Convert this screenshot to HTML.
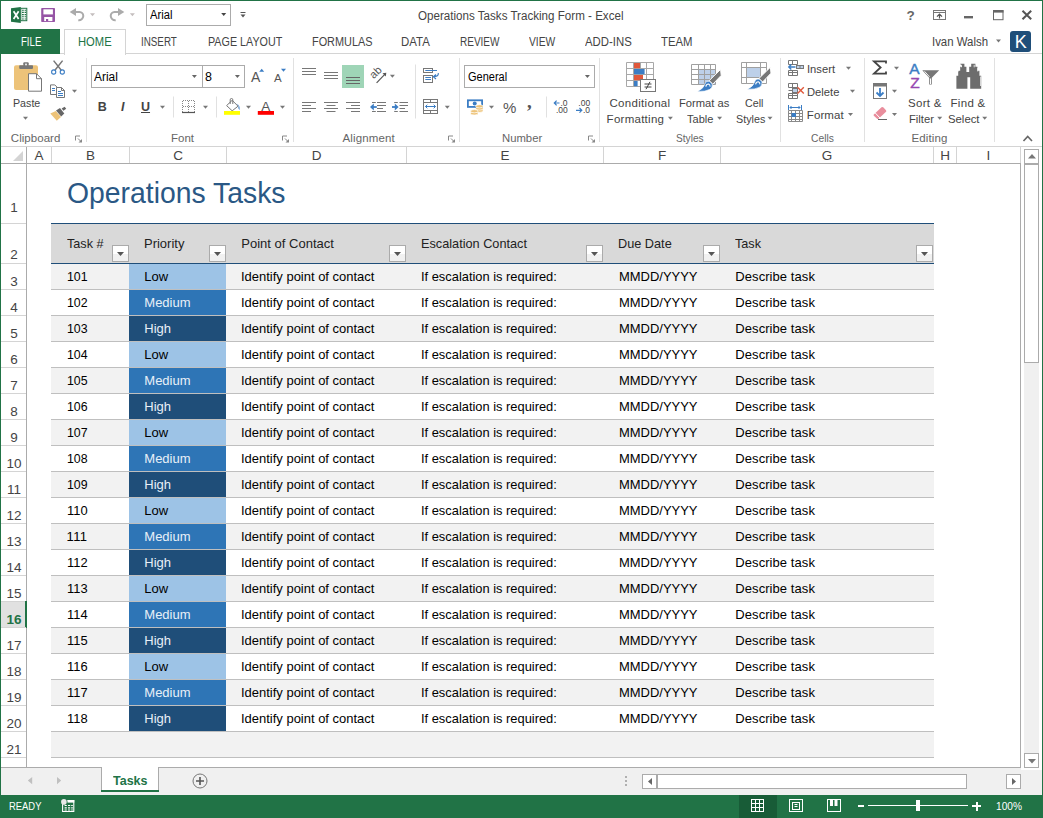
<!DOCTYPE html>
<html><head><meta charset="utf-8"><title>Operations Tasks Tracking Form - Excel</title>
<style>
html,body{margin:0;padding:0;}
body{width:1043px;height:818px;position:relative;overflow:hidden;background:#fff;font-family:"Liberation Sans",sans-serif;}
.t{position:absolute;white-space:nowrap;line-height:20px;height:20px;}
.r{position:absolute;box-sizing:border-box;}
svg{position:absolute;overflow:visible;}
</style></head><body>

<div class="r" style="left:0px;top:0px;width:1043px;height:818px;border:1px solid #217346;border-bottom:none;"></div>
<!--TITLEBAR-->
<span class="t" style="left:418.20px;top:6.00px;font-size:12px;color:#444;transform:scaleX(0.9670);transform-origin:0 0;">Operations Tasks Tracking Form - Excel</span>
<div class="r" style="left:146px;top:4px;width:85px;height:22px;background:#fff;border:1px solid #ababab;"></div>
<span class="t" style="left:149.60px;top:5.00px;font-size:12.5px;color:#000;transform:scaleX(0.8957);transform-origin:0 0;">Arial</span>
<!--/TITLEBAR-->
<!--TABS-->
<div class="r" style="left:1px;top:53px;width:1041px;height:1px;background:#d4d4d4;"></div>
<div class="r" style="left:1px;top:29px;width:59px;height:25px;background:#217346;"></div>
<span class="t" style="left:20.60px;top:32.00px;font-size:12.5px;color:#fff;transform:scaleX(0.7690);transform-origin:0 0;">FILE</span>
<div class="r" style="left:64px;top:29px;width:62px;height:26px;background:#fff;border:1px solid #d4d4d4;border-bottom:none;"></div>
<span class="t" style="left:78.00px;top:32.00px;font-size:12.5px;color:#217346;transform:scaleX(0.8960);transform-origin:0 0;">HOME</span>
<span class="t" style="left:141.20px;top:32.00px;font-size:12.5px;color:#444;transform:scaleX(0.7849);transform-origin:0 0;">INSERT</span>
<span class="t" style="left:207.50px;top:32.00px;font-size:12.5px;color:#444;transform:scaleX(0.8597);transform-origin:0 0;">PAGE LAYOUT</span>
<span class="t" style="left:312.00px;top:32.00px;font-size:12.5px;color:#444;transform:scaleX(0.8711);transform-origin:0 0;">FORMULAS</span>
<span class="t" style="left:401.20px;top:32.00px;font-size:12.5px;color:#444;transform:scaleX(0.9148);transform-origin:0 0;">DATA</span>
<span class="t" style="left:459.50px;top:32.00px;font-size:12.5px;color:#444;transform:scaleX(0.8010);transform-origin:0 0;">REVIEW</span>
<span class="t" style="left:528.75px;top:32.00px;font-size:12.5px;color:#444;transform:scaleX(0.8217);transform-origin:0 0;">VIEW</span>
<span class="t" style="left:585.00px;top:32.00px;font-size:12.5px;color:#444;transform:scaleX(0.9096);transform-origin:0 0;">ADD-INS</span>
<span class="t" style="left:660.50px;top:32.00px;font-size:12.5px;color:#444;transform:scaleX(0.9071);transform-origin:0 0;">TEAM</span>
<span class="t" style="left:932.40px;top:32.00px;font-size:12.5px;color:#444;transform:scaleX(0.9126);transform-origin:0 0;">Ivan Walsh</span>
<div class="r" style="left:1010px;top:31px;width:21px;height:21px;background:#1f4e79;border-radius:3px;"></div>
<span class="t" style="left:1014.80px;top:32.00px;font-size:18px;color:#fff;">K</span>
<!--/TABS-->
<!--RIBBON-->
<div class="r" style="left:1px;top:146px;width:1041px;height:1px;background:#d4d4d4;"></div>
<div class="r" style="left:86px;top:58px;width:1px;height:84px;background:#e1e1e1;"></div>
<div class="r" style="left:293px;top:58px;width:1px;height:84px;background:#e1e1e1;"></div>
<div class="r" style="left:459px;top:58px;width:1px;height:84px;background:#e1e1e1;"></div>
<div class="r" style="left:599px;top:58px;width:1px;height:84px;background:#e1e1e1;"></div>
<div class="r" style="left:780px;top:58px;width:1px;height:84px;background:#e1e1e1;"></div>
<div class="r" style="left:864px;top:58px;width:1px;height:84px;background:#e1e1e1;"></div>
<div class="r" style="left:994px;top:58px;width:1px;height:84px;background:#e1e1e1;"></div>
<span class="t" style="left:10.80px;top:128.00px;font-size:11.5px;color:#666;letter-spacing:0.042px;">Clipboard</span>
<span class="t" style="left:170.70px;top:128.00px;font-size:11.5px;color:#666;transform:scaleX(0.9995);transform-origin:0 0;">Font</span>
<span class="t" style="left:342.50px;top:128.00px;font-size:11.5px;color:#666;letter-spacing:0.129px;">Alignment</span>
<span class="t" style="left:501.80px;top:128.00px;font-size:11.5px;color:#666;transform:scaleX(0.9828);transform-origin:0 0;">Number</span>
<span class="t" style="left:675.60px;top:128.00px;font-size:11.5px;color:#666;transform:scaleX(0.8813);transform-origin:0 0;">Styles</span>
<span class="t" style="left:810.60px;top:128.00px;font-size:11.5px;color:#666;transform:scaleX(0.8959);transform-origin:0 0;">Cells</span>
<span class="t" style="left:911.50px;top:128.00px;font-size:11.5px;color:#666;letter-spacing:0.105px;">Editing</span>
<div class="r" style="left:91px;top:65px;width:112px;height:23px;background:#fff;border:1px solid #ababab;"></div>
<div class="r" style="left:202px;top:65px;width:43px;height:23px;background:#fff;border:1px solid #ababab;"></div>
<span class="t" style="left:94.20px;top:67.00px;font-size:12.5px;color:#000;transform:scaleX(0.9517);transform-origin:0 0;">Arial</span>
<span class="t" style="left:205.00px;top:67.00px;font-size:12.5px;color:#000;">8</span>
<div class="r" style="left:464px;top:65px;width:131px;height:23px;background:#fff;border:1px solid #ababab;"></div>
<span class="t" style="left:467.60px;top:67.00px;font-size:12.5px;color:#000;transform:scaleX(0.8792);transform-origin:0 0;">General</span>
<span class="t" style="left:12.70px;top:93.00px;font-size:11.5px;color:#444;transform:scaleX(0.9283);transform-origin:0 0;">Paste</span>
<span class="t" style="left:609.50px;top:93.00px;font-size:11.5px;color:#444;letter-spacing:0.305px;">Conditional</span>
<span class="t" style="left:606.60px;top:109.00px;font-size:11.5px;color:#444;letter-spacing:0.264px;">Formatting</span>
<span class="t" style="left:679.00px;top:93.00px;font-size:11.5px;color:#444;transform:scaleX(0.9737);transform-origin:0 0;">Format as</span>
<span class="t" style="left:687.20px;top:109.00px;font-size:11.5px;color:#444;transform:scaleX(0.9602);transform-origin:0 0;">Table</span>
<span class="t" style="left:744.60px;top:93.00px;font-size:11.5px;color:#444;transform:scaleX(0.9288);transform-origin:0 0;">Cell</span>
<span class="t" style="left:735.50px;top:109.00px;font-size:11.5px;color:#444;transform:scaleX(0.9356);transform-origin:0 0;">Styles</span>
<span class="t" style="left:806.80px;top:59.00px;font-size:11.5px;color:#444;transform:scaleX(0.9735);transform-origin:0 0;">Insert</span>
<span class="t" style="left:806.80px;top:82.00px;font-size:11.5px;color:#444;transform:scaleX(0.9746);transform-origin:0 0;">Delete</span>
<span class="t" style="left:806.80px;top:105.00px;font-size:11.5px;color:#444;letter-spacing:0.096px;">Format</span>
<span class="t" style="left:908.00px;top:93.00px;font-size:11.5px;color:#444;letter-spacing:0.290px;">Sort &amp;</span>
<span class="t" style="left:909.00px;top:109.00px;font-size:11.5px;color:#444;transform:scaleX(0.9782);transform-origin:0 0;">Filter</span>
<span class="t" style="left:950.50px;top:93.00px;font-size:11.5px;color:#444;letter-spacing:0.310px;">Find &amp;</span>
<span class="t" style="left:948.00px;top:109.00px;font-size:11.5px;color:#444;transform:scaleX(0.9855);transform-origin:0 0;">Select</span>
<span class="t" style="left:97.80px;top:97.00px;font-size:12.5px;color:#444;font-weight:bold;">B</span>
<span class="t" style="left:121.00px;top:97.00px;font-size:12.5px;color:#444;font-weight:bold;font-style:italic;font-family:"Liberation Serif",serif;">I</span>
<span class="t" style="left:141.00px;top:97.00px;font-size:12.5px;color:#444;font-weight:bold;text-decoration:underline;">U</span>
<span class="t" style="left:251.00px;top:67.00px;font-size:14px;color:#555;">A</span>
<span class="t" style="left:274.00px;top:68.00px;font-size:11.5px;color:#555;">A</span>
<span class="t" style="left:261.20px;top:97.00px;font-size:13.5px;color:#555;">A</span>
<span class="t" style="left:906.60px;top:6.00px;font-size:13.5px;color:#666;font-weight:bold;">?</span>
<!--ICONS-->
<svg style="left:0;top:0" width="1043" height="150"><path d="M11 8.2L20.8 7V23L11 21.8Z" fill="#217346"/>
<path d="M13.6 11.2L18.6 19M18.6 11.2L13.6 19" stroke="#fff" stroke-width="1.7"/>
<rect x="20.8" y="8.3" width="6" height="12.4" fill="#fff" stroke="#217346" stroke-width="1"/>
<path d="M22 10.2h1.8M24.6 10.2h1.6" stroke="#217346" stroke-width="1.1"/>
<path d="M22 12.4h1.8M24.6 12.4h1.6" stroke="#217346" stroke-width="1.1"/>
<path d="M22 14.6h1.8M24.6 14.6h1.6" stroke="#217346" stroke-width="1.1"/>
<path d="M22 16.8h1.8M24.6 16.8h1.6" stroke="#217346" stroke-width="1.1"/>
<path d="M22 19.0h1.8M24.6 19.0h1.6" stroke="#217346" stroke-width="1.1"/>
<rect x="41.2" y="8" width="13.8" height="14" rx="0.8" fill="#9654a5"/>
<rect x="43.4" y="9.3" width="9.5" height="5.1" fill="#fff"/>
<rect x="44.2" y="17" width="8.2" height="4.1" fill="#fff"/>
<rect x="46" y="19" width="2.2" height="2.1" fill="#9654a5"/>
<path d="M69.7 12L76 8V16Z" fill="#ababab"/>
<path d="M74 12H79.5A4 4 0 0 1 83.3 16A4.5 4.5 0 0 1 78.3 20.2" fill="none" stroke="#ababab" stroke-width="2"/>
<path d="M90.0 13.2h5l-2.5 3z" fill="#c4bebe"/>
<path d="M124.3 12L118 8V16Z" fill="#ababab"/>
<path d="M120 12H114.5A4 4 0 0 0 110.7 16A4.5 4.5 0 0 0 115.7 20.2" fill="none" stroke="#ababab" stroke-width="2"/>
<path d="M129.9 13.2h5l-2.5 3z" fill="#c4bebe"/>
<path d="M221.2 13.0h5l-2.5 3z" fill="#444"/>
<path d="M240.5 12.5h5" stroke="#555"/><path d="M240.5 14.5h5l-2.5 3z" fill="#555"/>
<rect x="933.5" y="10.5" width="12" height="9" fill="none" stroke="#777"/>
<path d="M933.5 12.5h12" stroke="#777"/>
<path d="M939.5 18.5V14.2M937 16.7L939.5 14.2L942 16.7" fill="none" stroke="#555" stroke-width="1.2"/>
<rect x="964" y="16" width="9" height="2.4" fill="#666"/>
<rect x="993.5" y="10.7" width="9.5" height="9" fill="none" stroke="#666"/><rect x="993" y="10" width="10.5" height="2.6" fill="#666"/>
<path d="M1022.5 10.8L1031.2 19.3M1031.2 10.8L1022.5 19.3" stroke="#555" stroke-width="2"/>
<path d="M996.0 39.5h5l-2.5 3z" fill="#777"/><rect x="14" y="65.3" width="24" height="24.7" rx="2" fill="#edc379"/>
<rect x="19.2" y="65.3" width="13.8" height="3.6" rx="0.8" fill="#777"/>
<rect x="23.3" y="62.2" width="5.4" height="4" rx="1" fill="#777"/><rect x="25.2" y="63.6" width="1.6" height="1.7" fill="#fff"/>
<path d="M28.5 73.7H36.5L41.5 78.7V91.2H28.5Z" fill="#fff" stroke="#777"/><path d="M36.5 73.7V78.7H41.5" fill="none" stroke="#777"/>
<path d="M23.0 116.8h5l-2.5 3z" fill="#777"/>
<path d="M53.6 60.6L61.3 70.2M62.6 60.6L54.9 70.2" stroke="#777" stroke-width="1.5"/>
<circle cx="53.7" cy="72" r="2.1" fill="none" stroke="#3b7dc4" stroke-width="1.1"/><circle cx="62.3" cy="72" r="2.1" fill="none" stroke="#3b7dc4" stroke-width="1.1"/>
<path d="M50.5 84.9H54.8L57 87.1V94.5H50.5Z" fill="#fff" stroke="#777"/>
<path d="M52 88.5h3M52 90.5h3" stroke="#3b7dc4"/>
<path d="M56.5 87.5H61.5L64.5 90.5V97.5H56.5Z" fill="#fff" stroke="#777"/><path d="M61.5 87.5V90.5H64.5" fill="none" stroke="#777"/>
<path d="M58 91.5h3M58 93.5h5M58 95.5h5" stroke="#3b7dc4"/>
<path d="M72.0 89.8h5l-2.5 3z" fill="#777"/>
<path d="M50.3 113.4L55.8 111L61 117L56.8 120.8Z" fill="#edc379"/>
<path d="M56 110.4L60 107.9L64.3 113.5L61.2 116.6Z" fill="#666"/>
<path d="M61.7 108.4L64.6 106.8L66.2 108.8L63.4 110.7Z" fill="#666"/>
<path d="M75.5 140.5V136.0H80" fill="none" stroke="#888"/><path d="M78 138.5L81.5 142.0" stroke="#888"/><path d="M82 139.0V142.5H78.5Z" fill="#888"/>
<path d="M191.9 75.0h5l-2.5 3z" fill="#666"/>
<path d="M234.9 75.0h5l-2.5 3z" fill="#666"/>
<path d="M259.2 71.8h5l-2.5 -3z" fill="#3b7dc4"/>
<path d="M281 68.8h5l-2.5 3z" fill="#3b7dc4"/>
<path d="M160.0 105.8h5l-2.5 3z" fill="#777"/>
<path d="M173.5 96.5V117.5M216.5 96.5V117.5" stroke="#e1e1e1"/>
<path d="M182.5 100.5H194.5M182.5 106.5H194.5M182.5 100.5V112M188.5 100.5V112M194.5 100.5V112" stroke="#888" stroke-dasharray="1 1" fill="none" shape-rendering="crispEdges"/>
<path d="M182 112.5H195" stroke="#555" stroke-width="1.2"/>
<path d="M203.0 105.8h5l-2.5 3z" fill="#777"/>
<path d="M232.2 100.3L238 106.2L232.2 110.8L226.6 105.6Z" fill="#fff" stroke="#777"/>
<path d="M230.2 104V99.8a1.3 1.3 0 0 1 2.6 0V104" fill="none" stroke="#777"/>
<path d="M236.6 103.6Q240.4 105.5 239.4 110.2Q237.6 108.4 238.6 106Z" fill="#3b7dc4"/>
<rect x="224" y="111" width="16" height="3.8" fill="#ffff00"/>
<path d="M246.0 105.8h5l-2.5 3z" fill="#777"/>
<rect x="257.8" y="111" width="16.2" height="3.8" fill="#ff0000"/>
<path d="M280.0 105.8h5l-2.5 3z" fill="#777"/>
<path d="M282.5 140.5V136.0H287" fill="none" stroke="#888"/><path d="M285 138.5L288.5 142.0" stroke="#888"/><path d="M289 139.0V142.5H285.5Z" fill="#888"/>
<path d="M302 68.5h14M302 71.5h14M302 74.5h14" stroke="#777"/>
<path d="M324 72.5h14M324 75.5h14M324 78.5h14" stroke="#777"/>
<rect x="342" y="65" width="22" height="23" fill="#9fd5b7"/>
<path d="M346 77.5h14M346 80.5h14M346 83.5h14" stroke="#666"/>
<path d="M376.6 82.8L385 74.2" stroke="#555" stroke-width="1.2"/><path d="M386.3 72.8L385.8 76.6L382.5 73.3Z" fill="#555"/>
<text x="0" y="0" transform="translate(373.8,79.3) rotate(-45)" font-size="11" fill="#555" font-family="Liberation Sans, sans-serif">ab</text>
<path d="M389.9 74.8h5l-2.5 3z" fill="#777"/>
<path d="M415.5 64.5V118.5M546.5 96.5V117.5" stroke="#e1e1e1"/>
<path d="M302 102.5h14M302 105.5h9M302 108.5h14M302 111.5h9" stroke="#777"/>
<path d="M324 102.5h14M326.5 105.5h9M324 108.5h14M326.5 111.5h9" stroke="#777"/>
<path d="M346 102.5h14M351 105.5h9M346 108.5h14M351 111.5h9" stroke="#777"/>
<path d="M372 102.5h3.8M377 102.5h9M377 105.5h9M377 108.5h6M372 111.5h3.8M377 111.5h9" stroke="#777"/>
<path d="M376.8 107H371.5" stroke="#3b7dc4" stroke-width="1.8" fill="none"/><path d="M370 107L373.8 103.6V110.4Z" fill="#3b7dc4"/>
<path d="M394.2 102.5h3.6M399.5 102.5h8.5M399.5 105.5h8.5M399.5 108.5h5.5M394.2 111.5h3.6M399.5 111.5h8.5" stroke="#777"/>
<path d="M392 107H396.5" stroke="#3b7dc4" stroke-width="1.8" fill="none"/><path d="M398.6 107L394.8 103.6V110.4Z" fill="#3b7dc4"/>
<rect x="423.5" y="68.5" width="9" height="4" fill="#fff" stroke="#777"/><rect x="423.5" y="75.5" width="9" height="7" fill="#fff" stroke="#777"/>
<path d="M425.3 70.5H437M425.3 77.5h5.7M425.3 79.5h5.7" stroke="#3b7dc4"/>
<path d="M438.3 73Q438.8 76.7 433.5 76.7M436 74.5L433.3 76.7L436 79" fill="none" stroke="#3b7dc4" stroke-width="1.1"/>
<rect x="423.5" y="99.5" width="14" height="14" fill="#fff" stroke="#777"/>
<path d="M423.5 102.5h14M423.5 110.5h14M430.5 99.5v3M430.5 110.5v3" stroke="#777"/>
<path d="M425.5 106.5H435.5M427.3 104.7L425.5 106.5L427.3 108.3M433.7 104.7L435.5 106.5L433.7 108.3" stroke="#3b7dc4" fill="none"/>
<path d="M444.8 105.8h5l-2.5 3z" fill="#777"/>
<path d="M448.5 140.5V136.0H453" fill="none" stroke="#888"/><path d="M451 138.5L454.5 142.0" stroke="#888"/><path d="M455 139.0V142.5H451.5Z" fill="#888"/>
<path d="M584.9 75.0h5l-2.5 3z" fill="#666"/>
<rect x="467.9" y="100.3" width="14.2" height="6.6" fill="#fff" stroke="#3b7dc4" stroke-width="1.8"/>
<circle cx="474.7" cy="103.4" r="2" fill="#3b7dc4"/>
<ellipse cx="479.4" cy="110.7" rx="3.7" ry="1.6" fill="#edc379" stroke="#fff" stroke-width="0.7"/>
<ellipse cx="479.4" cy="108.5" rx="3.7" ry="1.6" fill="#edc379" stroke="#fff" stroke-width="0.7"/>
<ellipse cx="479.4" cy="106.3" rx="3.7" ry="1.6" fill="#edc379" stroke="#fff" stroke-width="0.7"/>
<ellipse cx="474.3" cy="113.4" rx="3.7" ry="1.6" fill="#edc379" stroke="#fff" stroke-width="0.7"/>
<ellipse cx="474.3" cy="111.2" rx="3.7" ry="1.6" fill="#edc379" stroke="#fff" stroke-width="0.7"/>
<path d="M489.0 105.8h5l-2.5 3z" fill="#777"/>
<text x="503" y="113" font-size="15" fill="#555" font-family="Liberation Sans, sans-serif">%</text>
<text x="527" y="108.2" font-size="19" font-weight="bold" fill="#555" font-family="Liberation Serif, serif">,</text>
<text x="560.5" y="105.6" font-size="8.5" fill="#444" font-family="Liberation Sans, sans-serif">.0</text><text x="556" y="113" font-size="8.5" fill="#444" font-family="Liberation Sans, sans-serif">.00</text>
<path d="M559.5 103H554.3M556.6 100.7L554.3 103L556.6 105.3" stroke="#3b7dc4" stroke-width="1.2" fill="none"/>
<text x="578.3" y="105.6" font-size="8.5" fill="#444" font-family="Liberation Sans, sans-serif">.00</text><text x="583" y="113" font-size="8.5" fill="#444" font-family="Liberation Sans, sans-serif">.0</text>
<path d="M576 110.3H581.8M579.5 108L581.8 110.3L579.5 112.6" stroke="#3b7dc4" stroke-width="1.2" fill="none"/>
<path d="M588.5 140.5V136.0H593" fill="none" stroke="#888"/><path d="M591 138.5L594.5 142.0" stroke="#888"/><path d="M595 139.0V142.5H591.5Z" fill="#888"/><rect x="626.5" y="62.5" width="27" height="24" fill="#fff"/>
<path d="M626.5 62.5H653.5V86.5H626.5ZM633.5 62.5V86.5M640.5 62.5V86.5M646.5 62.5V86.5M626.5 68.5H653.5M626.5 74.5H653.5M626.5 80.5H653.5" fill="none" stroke="#a8a8a8"/>
<rect x="634" y="63" width="6" height="5.2" fill="#e0583b"/><rect x="634" y="69" width="10.6" height="5.2" fill="#3b7dc4"/><rect x="634" y="75" width="9" height="5.2" fill="#e0583b"/><rect x="634" y="81" width="3.6" height="5.2" fill="#3b7dc4"/>
<rect x="640.5" y="79.5" width="15" height="12" fill="#fff" stroke="#777"/>
<path d="M644.5 84h7M644.5 87h7M650 81.8L646 89.2" stroke="#444" stroke-width="1"/>
<path d="M667.9 116.8h5l-2.5 3z" fill="#777"/>
<rect x="691.5" y="64.5" width="24" height="20" fill="#fff"/>
<rect x="698" y="69" width="17.5" height="15.5" fill="#bdd0e9"/>
<path d="M691.5 64.5H715.5V84.5H691.5ZM698.5 64.5V84.5M704.5 64.5V84.5M710.5 64.5V84.5M691.5 69.5H715.5M691.5 74.5H715.5M691.5 79.5H715.5" fill="none" stroke="#a0a0a0"/>
<path d="M720.6 69.4L721.2 75.4L712.8 84.2L709.2 80.6Z" fill="#777" stroke="#fff" stroke-width="1"/><path d="M697.6 91.4Q703.5 88.5 704.6 84.6Q706.0 80.6 709.6 81.4L712.2 84.0Q713.0 87.6 709.4 89.6Q705.0 91.8 697.6 91.4Z" fill="#3b7dc4" stroke="#fff" stroke-width="0.6"/><path d="M705.8 86.6Q706.2 84.0 708.6 84.0Q710.4 84.6 710.0 86.6" fill="none" stroke="#fff" stroke-width="1.1"/>
<path d="M717.1 116.8h5l-2.5 3z" fill="#777"/>
<rect x="741.5" y="62.5" width="25" height="21" fill="#fff"/>
<rect x="746.5" y="67" width="14" height="10.5" fill="#bdd0e9"/>
<path d="M741.5 62.5H766.5V83.5H741.5ZM746.5 62.5V83.5M760.5 62.5V83.5M741.5 67.5H766.5M741.5 77.5H766.5" fill="none" stroke="#a0a0a0"/>
<path d="M770.4 67.2L771.0 73.2L762.6 82.0L759.0 78.4Z" fill="#777" stroke="#fff" stroke-width="1"/><path d="M747.4 89.2Q753.3 86.3 754.4 82.4Q755.8 78.4 759.4 79.2L762.0 81.8Q762.8 85.4 759.2 87.4Q754.8 89.6 747.4 89.2Z" fill="#3b7dc4" stroke="#fff" stroke-width="0.6"/><path d="M755.6 84.4Q756.0 81.8 758.4 81.8Q760.2 82.4 759.8 84.4" fill="none" stroke="#fff" stroke-width="1.1"/>
<path d="M767.5 116.8h5l-2.5 3z" fill="#777"/>
<path d="M788.5 60.5H797.5V64.5H788.5ZM792.5 60.5V64.5" fill="none" stroke="#777"/>
<rect x="796.5" y="65.5" width="7" height="3" fill="#bdd0e9" stroke="#777"/><path d="M800 65.5v3" stroke="#777"/>
<path d="M788.5 70.5H797.5V75.5H788.5ZM792.5 70.5V75.5M788.5 72.5H797.5" fill="none" stroke="#777"/>
<path d="M795.5 67H788.8M791.3 64.5L788.8 67L791.3 69.5" stroke="#3b7dc4" stroke-width="1.4" fill="none"/>
<path d="M846.0 66.7h5l-2.5 3z" fill="#777"/>
<path d="M788.5 83.5H797.5V87.5H788.5ZM792.5 83.5V87.5" fill="none" stroke="#777"/>
<rect x="792.5" y="88.5" width="5" height="4" fill="#bdd0e9" stroke="#777"/><path d="M788.5 90.5h4" stroke="#777"/>
<path d="M788.5 93.5H797.5V98.5H788.5ZM792.5 93.5V98.5M788.5 95.5H797.5" fill="none" stroke="#777"/>
<path d="M797.5 87.3L803.8 93.6M803.8 87.3L797.5 93.6" stroke="#e0583b" stroke-width="1.4"/>
<path d="M850.0 89.7h5l-2.5 3z" fill="#777"/>
<path d="M788.5 105v5M801.5 105v5M790 107.5h10M791.5 106L790 107.5L791.5 109M798.5 106L800 107.5L798.5 109" stroke="#3b7dc4" fill="none"/>
<path d="M788.5 110.5H802.5V121.5H788.5ZM791.5 110.5V121.5M795.5 110.5V121.5M799.5 110.5V121.5M788.5 113.5H802.5M788.5 116.5H802.5M788.5 119.5H802.5" fill="none" stroke="#8a8a8a"/>
<rect x="791.5" y="113" width="4.5" height="4" fill="#3b7dc4"/>
<path d="M848.0 113.0h5l-2.5 3z" fill="#777"/>
<path d="M886 63.5V61.4H874L880.6 67.5L874 73.6H886V71.5" fill="none" stroke="#444" stroke-width="1.8" stroke-linejoin="miter"/>
<path d="M894.0 66.7h5l-2.5 3z" fill="#777"/>
<rect x="873.5" y="83.5" width="13" height="15" fill="#fff" stroke="#777"/><rect x="873" y="83" width="14" height="3.5" fill="#777"/>
<path d="M880 88V96M876.5 92.5L880 96L883.5 92.5" stroke="#3b7dc4" stroke-width="1.8" fill="none"/>
<path d="M892.0 89.7h5l-2.5 3z" fill="#777"/>
<path d="M873.8 114.5L881.5 107.3Q882.5 106.5 883.5 107.5L886 110.2Q886.8 111.2 885.8 112L878.5 118.8Q877.5 119.3 876.8 118.5L873.8 115.8Q873.3 115.1 873.8 114.5Z" fill="#e98e9d"/>
<path d="M875.3 113L880 118" stroke="#fff" stroke-width="1"/>
<path d="M878 119.5H887" stroke="#666"/>
<path d="M892.0 113.0h5l-2.5 3z" fill="#777"/>
<text x="909.3" y="74.2" font-size="15.5" fill="#3b7dc4" stroke="#3b7dc4" stroke-width="0.4" font-family="Liberation Sans, sans-serif">A</text>
<text x="910.3" y="88.4" font-size="15.5" fill="#9647b0" stroke="#9647b0" stroke-width="0.4" font-family="Liberation Sans, sans-serif">Z</text>
<path d="M922.3 70.2H939.2L931.8 77.8V84.6H929.2V77.8Z" fill="#777"/><path d="M930 78.5h1v5.5h-1z" fill="#fff"/><path d="M924.5 71.3L929.5 76.8" stroke="#fff" stroke-width="0.9"/>
<path d="M937.2 116.8h5l-2.5 3z" fill="#777"/>
<path d="M960.2 63.8h4.2v3h2v5.2h2.8v-5.2h2v-3h4.2v3h2v4h2v5h1.8v12.9h-11v-11.5h-2.8v11.5h-11v-12.9h1.8v-5h2v-4h2z" fill="#6d6d6d"/>
<path d="M955.4 76.5v9.5M980.6 76.5v9.5M961.4 64.8v2.5M974.2 64.8v2.5M958.2 68v3.5M977.8 68v3.5" stroke="#fff" stroke-width="0.8"/>
<path d="M982.2 116.8h5l-2.5 3z" fill="#777"/>
<path d="M1023.5 141L1027.7 136.5L1032 141" fill="none" stroke="#666" stroke-width="1.6"/></svg>
<!--/ICONS-->
<!--/RIBBON-->
<!--GRID-->
<div class="r" style="left:1px;top:163px;width:1020px;height:1px;background:#ababab;"></div>
<div class="r" style="left:26px;top:147px;width:1px;height:620px;background:#ababab;"></div>
<span class="t" style="left:34.50px;top:146.00px;font-size:13.5px;color:#444;">A</span>
<div class="r" style="left:51px;top:147px;width:1px;height:16px;background:#d4d4d4;"></div>
<span class="t" style="left:86.00px;top:146.00px;font-size:13.5px;color:#444;">B</span>
<div class="r" style="left:129px;top:147px;width:1px;height:16px;background:#d4d4d4;"></div>
<span class="t" style="left:173.13px;top:146.00px;font-size:13.5px;color:#444;">C</span>
<div class="r" style="left:226px;top:147px;width:1px;height:16px;background:#d4d4d4;"></div>
<span class="t" style="left:311.63px;top:146.00px;font-size:13.5px;color:#444;">D</span>
<div class="r" style="left:406px;top:147px;width:1px;height:16px;background:#d4d4d4;"></div>
<span class="t" style="left:500.50px;top:146.00px;font-size:13.5px;color:#444;">E</span>
<div class="r" style="left:603px;top:147px;width:1px;height:16px;background:#d4d4d4;"></div>
<span class="t" style="left:657.88px;top:146.00px;font-size:13.5px;color:#444;">F</span>
<div class="r" style="left:720px;top:147px;width:1px;height:16px;background:#d4d4d4;"></div>
<span class="t" style="left:821.75px;top:146.00px;font-size:13.5px;color:#444;">G</span>
<div class="r" style="left:933px;top:147px;width:1px;height:16px;background:#d4d4d4;"></div>
<span class="t" style="left:940.13px;top:146.00px;font-size:13.5px;color:#444;">H</span>
<div class="r" style="left:956px;top:147px;width:1px;height:16px;background:#d4d4d4;"></div>
<span class="t" style="left:986.62px;top:146.00px;font-size:13.5px;color:#444;">I</span>
<div class="r" style="left:1020px;top:147px;width:1px;height:16px;background:#d4d4d4;"></div>
<div class="r" style="left:1020px;top:163px;width:1px;height:605px;background:#ababab;"></div>
<svg style="left:13px;top:151px" width="11" height="11"><path d="M10 0V10H0Z" fill="#d4d4d4"/></svg>
<span class="t" style="left:10.25px;top:198.00px;font-size:13.5px;color:#444;">1</span>
<div class="r" style="left:1px;top:223px;width:25px;height:1px;background:#d4d4d4;"></div>
<span class="t" style="left:10.25px;top:245.00px;font-size:13.5px;color:#444;">2</span>
<div class="r" style="left:1px;top:263px;width:25px;height:1px;background:#d4d4d4;"></div>
<span class="t" style="left:10.25px;top:272.00px;font-size:13.5px;color:#444;">3</span>
<div class="r" style="left:1px;top:289px;width:25px;height:1px;background:#d4d4d4;"></div>
<span class="t" style="left:10.25px;top:298.00px;font-size:13.5px;color:#444;">4</span>
<div class="r" style="left:1px;top:315px;width:25px;height:1px;background:#d4d4d4;"></div>
<span class="t" style="left:10.25px;top:324.00px;font-size:13.5px;color:#444;">5</span>
<div class="r" style="left:1px;top:341px;width:25px;height:1px;background:#d4d4d4;"></div>
<span class="t" style="left:10.25px;top:350.00px;font-size:13.5px;color:#444;">6</span>
<div class="r" style="left:1px;top:367px;width:25px;height:1px;background:#d4d4d4;"></div>
<span class="t" style="left:10.25px;top:376.00px;font-size:13.5px;color:#444;">7</span>
<div class="r" style="left:1px;top:393px;width:25px;height:1px;background:#d4d4d4;"></div>
<span class="t" style="left:10.25px;top:402.00px;font-size:13.5px;color:#444;">8</span>
<div class="r" style="left:1px;top:419px;width:25px;height:1px;background:#d4d4d4;"></div>
<span class="t" style="left:10.25px;top:428.00px;font-size:13.5px;color:#444;">9</span>
<div class="r" style="left:1px;top:445px;width:25px;height:1px;background:#d4d4d4;"></div>
<span class="t" style="left:6.49px;top:454.00px;font-size:13.5px;color:#444;">10</span>
<div class="r" style="left:1px;top:471px;width:25px;height:1px;background:#d4d4d4;"></div>
<span class="t" style="left:6.99px;top:480.00px;font-size:13.5px;color:#444;">11</span>
<div class="r" style="left:1px;top:497px;width:25px;height:1px;background:#d4d4d4;"></div>
<span class="t" style="left:6.49px;top:506.00px;font-size:13.5px;color:#444;">12</span>
<div class="r" style="left:1px;top:523px;width:25px;height:1px;background:#d4d4d4;"></div>
<span class="t" style="left:6.49px;top:532.00px;font-size:13.5px;color:#444;">13</span>
<div class="r" style="left:1px;top:549px;width:25px;height:1px;background:#d4d4d4;"></div>
<span class="t" style="left:6.49px;top:558.00px;font-size:13.5px;color:#444;">14</span>
<div class="r" style="left:1px;top:575px;width:25px;height:1px;background:#d4d4d4;"></div>
<span class="t" style="left:6.49px;top:584.00px;font-size:13.5px;color:#444;">15</span>
<div class="r" style="left:1px;top:601px;width:25px;height:1px;background:#d4d4d4;"></div>
<div class="r" style="left:1px;top:602px;width:25px;height:25px;background:#e1e1e1;"></div>
<div class="r" style="left:25px;top:601px;width:2px;height:27px;background:#217346;"></div>
<span class="t" style="left:6.49px;top:610.00px;font-size:13.5px;color:#217346;font-weight:bold;">16</span>
<div class="r" style="left:1px;top:627px;width:25px;height:1px;background:#d4d4d4;"></div>
<span class="t" style="left:6.49px;top:636.00px;font-size:13.5px;color:#444;">17</span>
<div class="r" style="left:1px;top:653px;width:25px;height:1px;background:#d4d4d4;"></div>
<span class="t" style="left:6.49px;top:662.00px;font-size:13.5px;color:#444;">18</span>
<div class="r" style="left:1px;top:679px;width:25px;height:1px;background:#d4d4d4;"></div>
<span class="t" style="left:6.49px;top:688.00px;font-size:13.5px;color:#444;">19</span>
<div class="r" style="left:1px;top:705px;width:25px;height:1px;background:#d4d4d4;"></div>
<span class="t" style="left:6.49px;top:714.00px;font-size:13.5px;color:#444;">20</span>
<div class="r" style="left:1px;top:731px;width:25px;height:1px;background:#d4d4d4;"></div>
<span class="t" style="left:6.49px;top:740.00px;font-size:13.5px;color:#444;">21</span>
<div class="r" style="left:1px;top:757px;width:25px;height:1px;background:#d4d4d4;"></div>
<span class="t" style="left:67.00px;top:183.00px;font-size:29.5px;color:#2a5885;transform:scaleX(0.9610);transform-origin:0 0;">Operations Tasks</span>
<div class="r" style="left:51px;top:224px;width:883px;height:39px;background:#d9d9d9;"></div>
<div class="r" style="left:51px;top:223px;width:883px;height:1px;background:#1f4e79;"></div>
<div class="r" style="left:51px;top:263px;width:883px;height:1px;background:#1f4e79;"></div>
<span class="t" style="left:67.00px;top:234.00px;font-size:13px;color:#222;transform:scaleX(0.9741);transform-origin:0 0;">Task #</span>
<div class="r" style="left:112px;top:245px;width:17px;height:17px;border:1px solid #ababab;background:linear-gradient(#fff 50%,#f1f1f1 50%);"></div>
<svg style="left:117px;top:252px" width="7" height="4"><path d="M0 0H7L3.5 4Z" fill="#555"/></svg>
<span class="t" style="left:144.30px;top:234.00px;font-size:13px;color:#222;transform:scaleX(0.9988);transform-origin:0 0;">Priority</span>
<div class="r" style="left:209px;top:245px;width:17px;height:17px;border:1px solid #ababab;background:linear-gradient(#fff 50%,#f1f1f1 50%);"></div>
<svg style="left:214px;top:252px" width="7" height="4"><path d="M0 0H7L3.5 4Z" fill="#555"/></svg>
<span class="t" style="left:241.20px;top:234.00px;font-size:13px;color:#222;letter-spacing:0.019px;">Point of Contact</span>
<div class="r" style="left:389px;top:245px;width:17px;height:17px;border:1px solid #ababab;background:linear-gradient(#fff 50%,#f1f1f1 50%);"></div>
<svg style="left:394px;top:252px" width="7" height="4"><path d="M0 0H7L3.5 4Z" fill="#555"/></svg>
<span class="t" style="left:421.20px;top:234.00px;font-size:13px;color:#222;transform:scaleX(0.9779);transform-origin:0 0;">Escalation Contact</span>
<div class="r" style="left:586px;top:245px;width:17px;height:17px;border:1px solid #ababab;background:linear-gradient(#fff 50%,#f1f1f1 50%);"></div>
<svg style="left:591px;top:252px" width="7" height="4"><path d="M0 0H7L3.5 4Z" fill="#555"/></svg>
<span class="t" style="left:618.00px;top:234.00px;font-size:13px;color:#222;transform:scaleX(0.9778);transform-origin:0 0;">Due Date</span>
<div class="r" style="left:703px;top:245px;width:17px;height:17px;border:1px solid #ababab;background:linear-gradient(#fff 50%,#f1f1f1 50%);"></div>
<svg style="left:708px;top:252px" width="7" height="4"><path d="M0 0H7L3.5 4Z" fill="#555"/></svg>
<span class="t" style="left:735.30px;top:234.00px;font-size:13px;color:#222;transform:scaleX(0.9727);transform-origin:0 0;">Task</span>
<div class="r" style="left:916px;top:245px;width:17px;height:17px;border:1px solid #ababab;background:linear-gradient(#fff 50%,#f1f1f1 50%);"></div>
<svg style="left:921px;top:252px" width="7" height="4"><path d="M0 0H7L3.5 4Z" fill="#555"/></svg>
<div class="r" style="left:51px;top:264px;width:883px;height:25px;background:#f2f2f2;"></div>
<div class="r" style="left:129px;top:264px;width:97px;height:26px;background:#9dc3e6;"></div>
<div class="r" style="left:51px;top:289px;width:883px;height:1px;background:#bfbfbf;"></div>
<span class="t" style="left:66.60px;top:267.00px;font-size:13px;color:#000;transform:scaleX(0.9497);transform-origin:0 0;">101</span>
<span class="t" style="left:144.30px;top:267.00px;font-size:13px;color:#000;">Low</span>
<span class="t" style="left:241.20px;top:267.00px;font-size:13px;color:#000;transform:scaleX(0.9978);transform-origin:0 0;">Identify point of contact</span>
<span class="t" style="left:421.20px;top:267.00px;font-size:13px;color:#000;transform:scaleX(0.9891);transform-origin:0 0;">If escalation is required:</span>
<span class="t" style="left:618.50px;top:267.00px;font-size:13px;color:#000;transform:scaleX(0.9970);transform-origin:0 0;">MMDD/YYYY</span>
<span class="t" style="left:735.30px;top:267.00px;font-size:13px;color:#000;letter-spacing:0.073px;">Describe task</span>
<div class="r" style="left:129px;top:290px;width:97px;height:26px;background:#2e75b6;"></div>
<div class="r" style="left:51px;top:315px;width:883px;height:1px;background:#bfbfbf;"></div>
<span class="t" style="left:66.60px;top:293.00px;font-size:13px;color:#000;transform:scaleX(0.9497);transform-origin:0 0;">102</span>
<span class="t" style="left:144.30px;top:293.00px;font-size:13px;color:#e8f0f8;">Medium</span>
<span class="t" style="left:241.20px;top:293.00px;font-size:13px;color:#000;transform:scaleX(0.9978);transform-origin:0 0;">Identify point of contact</span>
<span class="t" style="left:421.20px;top:293.00px;font-size:13px;color:#000;transform:scaleX(0.9891);transform-origin:0 0;">If escalation is required:</span>
<span class="t" style="left:618.50px;top:293.00px;font-size:13px;color:#000;transform:scaleX(0.9970);transform-origin:0 0;">MMDD/YYYY</span>
<span class="t" style="left:735.30px;top:293.00px;font-size:13px;color:#000;letter-spacing:0.073px;">Describe task</span>
<div class="r" style="left:51px;top:316px;width:883px;height:25px;background:#f2f2f2;"></div>
<div class="r" style="left:129px;top:316px;width:97px;height:26px;background:#1f4e79;"></div>
<div class="r" style="left:51px;top:341px;width:883px;height:1px;background:#bfbfbf;"></div>
<span class="t" style="left:66.60px;top:319.00px;font-size:13px;color:#000;transform:scaleX(0.9497);transform-origin:0 0;">103</span>
<span class="t" style="left:144.30px;top:319.00px;font-size:13px;color:#e8f0f8;">High</span>
<span class="t" style="left:241.20px;top:319.00px;font-size:13px;color:#000;transform:scaleX(0.9978);transform-origin:0 0;">Identify point of contact</span>
<span class="t" style="left:421.20px;top:319.00px;font-size:13px;color:#000;transform:scaleX(0.9891);transform-origin:0 0;">If escalation is required:</span>
<span class="t" style="left:618.50px;top:319.00px;font-size:13px;color:#000;transform:scaleX(0.9970);transform-origin:0 0;">MMDD/YYYY</span>
<span class="t" style="left:735.30px;top:319.00px;font-size:13px;color:#000;letter-spacing:0.073px;">Describe task</span>
<div class="r" style="left:129px;top:342px;width:97px;height:26px;background:#9dc3e6;"></div>
<div class="r" style="left:51px;top:367px;width:883px;height:1px;background:#bfbfbf;"></div>
<span class="t" style="left:66.60px;top:345.00px;font-size:13px;color:#000;transform:scaleX(0.9497);transform-origin:0 0;">104</span>
<span class="t" style="left:144.30px;top:345.00px;font-size:13px;color:#000;">Low</span>
<span class="t" style="left:241.20px;top:345.00px;font-size:13px;color:#000;transform:scaleX(0.9978);transform-origin:0 0;">Identify point of contact</span>
<span class="t" style="left:421.20px;top:345.00px;font-size:13px;color:#000;transform:scaleX(0.9891);transform-origin:0 0;">If escalation is required:</span>
<span class="t" style="left:618.50px;top:345.00px;font-size:13px;color:#000;transform:scaleX(0.9970);transform-origin:0 0;">MMDD/YYYY</span>
<span class="t" style="left:735.30px;top:345.00px;font-size:13px;color:#000;letter-spacing:0.073px;">Describe task</span>
<div class="r" style="left:51px;top:368px;width:883px;height:25px;background:#f2f2f2;"></div>
<div class="r" style="left:129px;top:368px;width:97px;height:26px;background:#2e75b6;"></div>
<div class="r" style="left:51px;top:393px;width:883px;height:1px;background:#bfbfbf;"></div>
<span class="t" style="left:66.60px;top:371.00px;font-size:13px;color:#000;transform:scaleX(0.9497);transform-origin:0 0;">105</span>
<span class="t" style="left:144.30px;top:371.00px;font-size:13px;color:#e8f0f8;">Medium</span>
<span class="t" style="left:241.20px;top:371.00px;font-size:13px;color:#000;transform:scaleX(0.9978);transform-origin:0 0;">Identify point of contact</span>
<span class="t" style="left:421.20px;top:371.00px;font-size:13px;color:#000;transform:scaleX(0.9891);transform-origin:0 0;">If escalation is required:</span>
<span class="t" style="left:618.50px;top:371.00px;font-size:13px;color:#000;transform:scaleX(0.9970);transform-origin:0 0;">MMDD/YYYY</span>
<span class="t" style="left:735.30px;top:371.00px;font-size:13px;color:#000;letter-spacing:0.073px;">Describe task</span>
<div class="r" style="left:129px;top:394px;width:97px;height:26px;background:#1f4e79;"></div>
<div class="r" style="left:51px;top:419px;width:883px;height:1px;background:#bfbfbf;"></div>
<span class="t" style="left:66.60px;top:397.00px;font-size:13px;color:#000;transform:scaleX(0.9497);transform-origin:0 0;">106</span>
<span class="t" style="left:144.30px;top:397.00px;font-size:13px;color:#e8f0f8;">High</span>
<span class="t" style="left:241.20px;top:397.00px;font-size:13px;color:#000;transform:scaleX(0.9978);transform-origin:0 0;">Identify point of contact</span>
<span class="t" style="left:421.20px;top:397.00px;font-size:13px;color:#000;transform:scaleX(0.9891);transform-origin:0 0;">If escalation is required:</span>
<span class="t" style="left:618.50px;top:397.00px;font-size:13px;color:#000;transform:scaleX(0.9970);transform-origin:0 0;">MMDD/YYYY</span>
<span class="t" style="left:735.30px;top:397.00px;font-size:13px;color:#000;letter-spacing:0.073px;">Describe task</span>
<div class="r" style="left:51px;top:420px;width:883px;height:25px;background:#f2f2f2;"></div>
<div class="r" style="left:129px;top:420px;width:97px;height:26px;background:#9dc3e6;"></div>
<div class="r" style="left:51px;top:445px;width:883px;height:1px;background:#bfbfbf;"></div>
<span class="t" style="left:66.60px;top:423.00px;font-size:13px;color:#000;transform:scaleX(0.9497);transform-origin:0 0;">107</span>
<span class="t" style="left:144.30px;top:423.00px;font-size:13px;color:#000;">Low</span>
<span class="t" style="left:241.20px;top:423.00px;font-size:13px;color:#000;transform:scaleX(0.9978);transform-origin:0 0;">Identify point of contact</span>
<span class="t" style="left:421.20px;top:423.00px;font-size:13px;color:#000;transform:scaleX(0.9891);transform-origin:0 0;">If escalation is required:</span>
<span class="t" style="left:618.50px;top:423.00px;font-size:13px;color:#000;transform:scaleX(0.9970);transform-origin:0 0;">MMDD/YYYY</span>
<span class="t" style="left:735.30px;top:423.00px;font-size:13px;color:#000;letter-spacing:0.073px;">Describe task</span>
<div class="r" style="left:129px;top:446px;width:97px;height:26px;background:#2e75b6;"></div>
<div class="r" style="left:51px;top:471px;width:883px;height:1px;background:#bfbfbf;"></div>
<span class="t" style="left:66.60px;top:449.00px;font-size:13px;color:#000;transform:scaleX(0.9497);transform-origin:0 0;">108</span>
<span class="t" style="left:144.30px;top:449.00px;font-size:13px;color:#e8f0f8;">Medium</span>
<span class="t" style="left:241.20px;top:449.00px;font-size:13px;color:#000;transform:scaleX(0.9978);transform-origin:0 0;">Identify point of contact</span>
<span class="t" style="left:421.20px;top:449.00px;font-size:13px;color:#000;transform:scaleX(0.9891);transform-origin:0 0;">If escalation is required:</span>
<span class="t" style="left:618.50px;top:449.00px;font-size:13px;color:#000;transform:scaleX(0.9970);transform-origin:0 0;">MMDD/YYYY</span>
<span class="t" style="left:735.30px;top:449.00px;font-size:13px;color:#000;letter-spacing:0.073px;">Describe task</span>
<div class="r" style="left:51px;top:472px;width:883px;height:25px;background:#f2f2f2;"></div>
<div class="r" style="left:129px;top:472px;width:97px;height:26px;background:#1f4e79;"></div>
<div class="r" style="left:51px;top:497px;width:883px;height:1px;background:#bfbfbf;"></div>
<span class="t" style="left:66.60px;top:475.00px;font-size:13px;color:#000;transform:scaleX(0.9497);transform-origin:0 0;">109</span>
<span class="t" style="left:144.30px;top:475.00px;font-size:13px;color:#e8f0f8;">High</span>
<span class="t" style="left:241.20px;top:475.00px;font-size:13px;color:#000;transform:scaleX(0.9978);transform-origin:0 0;">Identify point of contact</span>
<span class="t" style="left:421.20px;top:475.00px;font-size:13px;color:#000;transform:scaleX(0.9891);transform-origin:0 0;">If escalation is required:</span>
<span class="t" style="left:618.50px;top:475.00px;font-size:13px;color:#000;transform:scaleX(0.9970);transform-origin:0 0;">MMDD/YYYY</span>
<span class="t" style="left:735.30px;top:475.00px;font-size:13px;color:#000;letter-spacing:0.073px;">Describe task</span>
<div class="r" style="left:129px;top:498px;width:97px;height:26px;background:#9dc3e6;"></div>
<div class="r" style="left:51px;top:523px;width:883px;height:1px;background:#bfbfbf;"></div>
<span class="t" style="left:66.60px;top:501.00px;font-size:13px;color:#000;transform:scaleX(0.9939);transform-origin:0 0;">110</span>
<span class="t" style="left:144.30px;top:501.00px;font-size:13px;color:#000;">Low</span>
<span class="t" style="left:241.20px;top:501.00px;font-size:13px;color:#000;transform:scaleX(0.9978);transform-origin:0 0;">Identify point of contact</span>
<span class="t" style="left:421.20px;top:501.00px;font-size:13px;color:#000;transform:scaleX(0.9891);transform-origin:0 0;">If escalation is required:</span>
<span class="t" style="left:618.50px;top:501.00px;font-size:13px;color:#000;transform:scaleX(0.9970);transform-origin:0 0;">MMDD/YYYY</span>
<span class="t" style="left:735.30px;top:501.00px;font-size:13px;color:#000;letter-spacing:0.073px;">Describe task</span>
<div class="r" style="left:51px;top:524px;width:883px;height:25px;background:#f2f2f2;"></div>
<div class="r" style="left:129px;top:524px;width:97px;height:26px;background:#2e75b6;"></div>
<div class="r" style="left:51px;top:549px;width:883px;height:1px;background:#bfbfbf;"></div>
<span class="t" style="left:66.60px;top:527.00px;font-size:13px;color:#000;letter-spacing:0.280px;">111</span>
<span class="t" style="left:144.30px;top:527.00px;font-size:13px;color:#e8f0f8;">Medium</span>
<span class="t" style="left:241.20px;top:527.00px;font-size:13px;color:#000;transform:scaleX(0.9978);transform-origin:0 0;">Identify point of contact</span>
<span class="t" style="left:421.20px;top:527.00px;font-size:13px;color:#000;transform:scaleX(0.9891);transform-origin:0 0;">If escalation is required:</span>
<span class="t" style="left:618.50px;top:527.00px;font-size:13px;color:#000;transform:scaleX(0.9970);transform-origin:0 0;">MMDD/YYYY</span>
<span class="t" style="left:735.30px;top:527.00px;font-size:13px;color:#000;letter-spacing:0.073px;">Describe task</span>
<div class="r" style="left:129px;top:550px;width:97px;height:26px;background:#1f4e79;"></div>
<div class="r" style="left:51px;top:575px;width:883px;height:1px;background:#bfbfbf;"></div>
<span class="t" style="left:66.60px;top:553.00px;font-size:13px;color:#000;transform:scaleX(0.9939);transform-origin:0 0;">112</span>
<span class="t" style="left:144.30px;top:553.00px;font-size:13px;color:#e8f0f8;">High</span>
<span class="t" style="left:241.20px;top:553.00px;font-size:13px;color:#000;transform:scaleX(0.9978);transform-origin:0 0;">Identify point of contact</span>
<span class="t" style="left:421.20px;top:553.00px;font-size:13px;color:#000;transform:scaleX(0.9891);transform-origin:0 0;">If escalation is required:</span>
<span class="t" style="left:618.50px;top:553.00px;font-size:13px;color:#000;transform:scaleX(0.9970);transform-origin:0 0;">MMDD/YYYY</span>
<span class="t" style="left:735.30px;top:553.00px;font-size:13px;color:#000;letter-spacing:0.073px;">Describe task</span>
<div class="r" style="left:51px;top:576px;width:883px;height:25px;background:#f2f2f2;"></div>
<div class="r" style="left:129px;top:576px;width:97px;height:26px;background:#9dc3e6;"></div>
<div class="r" style="left:51px;top:601px;width:883px;height:1px;background:#bfbfbf;"></div>
<span class="t" style="left:66.60px;top:579.00px;font-size:13px;color:#000;transform:scaleX(0.9939);transform-origin:0 0;">113</span>
<span class="t" style="left:144.30px;top:579.00px;font-size:13px;color:#000;">Low</span>
<span class="t" style="left:241.20px;top:579.00px;font-size:13px;color:#000;transform:scaleX(0.9978);transform-origin:0 0;">Identify point of contact</span>
<span class="t" style="left:421.20px;top:579.00px;font-size:13px;color:#000;transform:scaleX(0.9891);transform-origin:0 0;">If escalation is required:</span>
<span class="t" style="left:618.50px;top:579.00px;font-size:13px;color:#000;transform:scaleX(0.9970);transform-origin:0 0;">MMDD/YYYY</span>
<span class="t" style="left:735.30px;top:579.00px;font-size:13px;color:#000;letter-spacing:0.073px;">Describe task</span>
<div class="r" style="left:129px;top:602px;width:97px;height:26px;background:#2e75b6;"></div>
<div class="r" style="left:51px;top:627px;width:883px;height:1px;background:#bfbfbf;"></div>
<span class="t" style="left:66.60px;top:605.00px;font-size:13px;color:#000;transform:scaleX(0.9939);transform-origin:0 0;">114</span>
<span class="t" style="left:144.30px;top:605.00px;font-size:13px;color:#e8f0f8;">Medium</span>
<span class="t" style="left:241.20px;top:605.00px;font-size:13px;color:#000;transform:scaleX(0.9978);transform-origin:0 0;">Identify point of contact</span>
<span class="t" style="left:421.20px;top:605.00px;font-size:13px;color:#000;transform:scaleX(0.9891);transform-origin:0 0;">If escalation is required:</span>
<span class="t" style="left:618.50px;top:605.00px;font-size:13px;color:#000;transform:scaleX(0.9970);transform-origin:0 0;">MMDD/YYYY</span>
<span class="t" style="left:735.30px;top:605.00px;font-size:13px;color:#000;letter-spacing:0.073px;">Describe task</span>
<div class="r" style="left:51px;top:628px;width:883px;height:25px;background:#f2f2f2;"></div>
<div class="r" style="left:129px;top:628px;width:97px;height:26px;background:#1f4e79;"></div>
<div class="r" style="left:51px;top:653px;width:883px;height:1px;background:#bfbfbf;"></div>
<span class="t" style="left:66.60px;top:631.00px;font-size:13px;color:#000;transform:scaleX(0.9939);transform-origin:0 0;">115</span>
<span class="t" style="left:144.30px;top:631.00px;font-size:13px;color:#e8f0f8;">High</span>
<span class="t" style="left:241.20px;top:631.00px;font-size:13px;color:#000;transform:scaleX(0.9978);transform-origin:0 0;">Identify point of contact</span>
<span class="t" style="left:421.20px;top:631.00px;font-size:13px;color:#000;transform:scaleX(0.9891);transform-origin:0 0;">If escalation is required:</span>
<span class="t" style="left:618.50px;top:631.00px;font-size:13px;color:#000;transform:scaleX(0.9970);transform-origin:0 0;">MMDD/YYYY</span>
<span class="t" style="left:735.30px;top:631.00px;font-size:13px;color:#000;letter-spacing:0.073px;">Describe task</span>
<div class="r" style="left:129px;top:654px;width:97px;height:26px;background:#9dc3e6;"></div>
<div class="r" style="left:51px;top:679px;width:883px;height:1px;background:#bfbfbf;"></div>
<span class="t" style="left:66.60px;top:657.00px;font-size:13px;color:#000;transform:scaleX(0.9939);transform-origin:0 0;">116</span>
<span class="t" style="left:144.30px;top:657.00px;font-size:13px;color:#000;">Low</span>
<span class="t" style="left:241.20px;top:657.00px;font-size:13px;color:#000;transform:scaleX(0.9978);transform-origin:0 0;">Identify point of contact</span>
<span class="t" style="left:421.20px;top:657.00px;font-size:13px;color:#000;transform:scaleX(0.9891);transform-origin:0 0;">If escalation is required:</span>
<span class="t" style="left:618.50px;top:657.00px;font-size:13px;color:#000;transform:scaleX(0.9970);transform-origin:0 0;">MMDD/YYYY</span>
<span class="t" style="left:735.30px;top:657.00px;font-size:13px;color:#000;letter-spacing:0.073px;">Describe task</span>
<div class="r" style="left:51px;top:680px;width:883px;height:25px;background:#f2f2f2;"></div>
<div class="r" style="left:129px;top:680px;width:97px;height:26px;background:#2e75b6;"></div>
<div class="r" style="left:51px;top:705px;width:883px;height:1px;background:#bfbfbf;"></div>
<span class="t" style="left:66.60px;top:683.00px;font-size:13px;color:#000;transform:scaleX(0.9939);transform-origin:0 0;">117</span>
<span class="t" style="left:144.30px;top:683.00px;font-size:13px;color:#e8f0f8;">Medium</span>
<span class="t" style="left:241.20px;top:683.00px;font-size:13px;color:#000;transform:scaleX(0.9978);transform-origin:0 0;">Identify point of contact</span>
<span class="t" style="left:421.20px;top:683.00px;font-size:13px;color:#000;transform:scaleX(0.9891);transform-origin:0 0;">If escalation is required:</span>
<span class="t" style="left:618.50px;top:683.00px;font-size:13px;color:#000;transform:scaleX(0.9970);transform-origin:0 0;">MMDD/YYYY</span>
<span class="t" style="left:735.30px;top:683.00px;font-size:13px;color:#000;letter-spacing:0.073px;">Describe task</span>
<div class="r" style="left:129px;top:706px;width:97px;height:26px;background:#1f4e79;"></div>
<div class="r" style="left:51px;top:731px;width:883px;height:1px;background:#bfbfbf;"></div>
<span class="t" style="left:66.60px;top:709.00px;font-size:13px;color:#000;transform:scaleX(0.9939);transform-origin:0 0;">118</span>
<span class="t" style="left:144.30px;top:709.00px;font-size:13px;color:#e8f0f8;">High</span>
<span class="t" style="left:241.20px;top:709.00px;font-size:13px;color:#000;transform:scaleX(0.9978);transform-origin:0 0;">Identify point of contact</span>
<span class="t" style="left:421.20px;top:709.00px;font-size:13px;color:#000;transform:scaleX(0.9891);transform-origin:0 0;">If escalation is required:</span>
<span class="t" style="left:618.50px;top:709.00px;font-size:13px;color:#000;transform:scaleX(0.9970);transform-origin:0 0;">MMDD/YYYY</span>
<span class="t" style="left:735.30px;top:709.00px;font-size:13px;color:#000;letter-spacing:0.073px;">Describe task</span>
<div class="r" style="left:51px;top:732px;width:883px;height:25px;background:#f2f2f2;"></div>
<div class="r" style="left:51px;top:757px;width:883px;height:1px;background:#bfbfbf;"></div>
<div class="r" style="left:1021px;top:147px;width:21px;height:623px;background:#fff;"></div>
<div class="r" style="left:1024px;top:164px;width:15px;height:603px;background:#f0f0f0;"></div>
<div class="r" style="left:1024px;top:149px;width:15px;height:15px;background:#fff;border:1px solid #ababab;"></div>
<div class="r" style="left:1024px;top:164px;width:15px;height:199px;background:#fff;border:1px solid #ababab;"></div>
<div class="r" style="left:1024px;top:753px;width:15px;height:15px;background:#fff;border:1px solid #ababab;"></div>
<svg style="left:1027.5px;top:154px" width="8" height="5"><path d="M0 4.5H8L4 0Z" fill="#777"/></svg>
<svg style="left:1027.5px;top:759px" width="8" height="5"><path d="M0 0H8L4 4.5Z" fill="#777"/></svg>
<!--/GRID-->
<!--SHEETTABS-->
<div class="r" style="left:1px;top:767px;width:1020px;height:28px;background:#f0f0f0;"></div>
<div class="r" style="left:1021px;top:770px;width:21px;height:25px;background:#f0f0f0;"></div>
<div class="r" style="left:1px;top:767px;width:1020px;height:1px;background:#ababab;"></div>
<div class="r" style="left:101px;top:767px;width:58px;height:23px;background:#fff;border-left:1px solid #ababab;border-right:1px solid #ababab;"></div>
<div class="r" style="left:101px;top:790px;width:58px;height:2px;background:#217346;"></div>
<span class="t" style="left:113.00px;top:771.00px;font-size:13px;color:#217346;font-weight:bold;transform:scaleX(0.9611);transform-origin:0 0;">Tasks</span>
<svg style="left:25px;top:775px" width="40" height="12"><path d="M7.2 2V9.2L2.8 5.6Z M32 2V9.2L36.2 5.6Z" fill="#c0c0c0"/></svg>
<svg style="left:192px;top:773px" width="16" height="16"><circle cx="8" cy="8" r="7" fill="none" stroke="#777" stroke-width="1"/><path d="M4 8H12M8 4V12" stroke="#555" stroke-width="1.6"/></svg>
<div class="r" style="left:625px;top:776px;width:2px;height:2px;background:#b0b0b0;"></div>
<div class="r" style="left:625px;top:780px;width:2px;height:2px;background:#b0b0b0;"></div>
<div class="r" style="left:625px;top:784px;width:2px;height:2px;background:#b0b0b0;"></div>
<div class="r" style="left:642px;top:774px;width:15px;height:15px;background:#fff;border:1px solid #ababab;"></div>
<div class="r" style="left:657px;top:774px;width:310px;height:15px;background:#fff;border:1px solid #ababab;"></div>
<div class="r" style="left:1006px;top:774px;width:15px;height:15px;background:#fff;border:1px solid #ababab;"></div>
<svg style="left:647.5px;top:778px" width="4" height="7"><path d="M4 0V7L0 3.5Z" fill="#666"/></svg>
<svg style="left:1012px;top:778px" width="4" height="7"><path d="M0 0V7L4 3.5Z" fill="#666"/></svg>
<!--/SHEETTABS-->
<!--STATUS-->
<div class="r" style="left:0px;top:795px;width:1043px;height:23px;background:#217346;"></div>
<span class="t" style="left:8.60px;top:796.00px;font-size:11px;color:#fff;transform:scaleX(0.8549);transform-origin:0 0;">READY</span>
<div class="r" style="left:739px;top:795px;width:38px;height:23px;background:#185c37;"></div>
<div class="r" style="left:868px;top:805px;width:100px;height:1px;background:#fff;"></div>
<div class="r" style="left:916px;top:800px;width:4px;height:11px;background:#fff;"></div>
<div class="r" style="left:858px;top:805px;width:6px;height:2px;background:#fff;"></div>
<div class="r" style="left:972px;top:805px;width:9px;height:2px;background:#fff;"></div>
<div class="r" style="left:975.5px;top:801.5px;width:2px;height:9px;background:#fff;"></div>
<span class="t" style="left:996.00px;top:796.00px;font-size:11px;color:#fff;transform:scaleX(0.9241);transform-origin:0 0;">100%</span>
<!--SICONS-->
<svg style="left:0;top:0" width="1043" height="818"><path d="M62.6 803.5V811.5H73.8V800.6H67.5" fill="none" stroke="#fff" stroke-width="1.1"/><rect x="67.5" y="800" width="6.8" height="2.6" fill="#fff"/><circle cx="63.9" cy="801.9" r="2.8" fill="#e8e8e8"/>
<path d="M64.6 805.5h2.2M68 805.5h2.2M71.2 805.5h1.6M64.6 807.8h2.2M68 807.8h2.2M71.2 807.8h1.6M64.6 810h2.2M68 810h2.2M71.2 810h1.6" stroke="#fff" stroke-width="1.2"/>
<rect x="751.5" y="799.5" width="12" height="12" fill="none" stroke="#fff"/><path d="M755.5 799.5v12M759.5 799.5v12M751.5 803.5h12M751.5 807.5h12" stroke="#fff"/>
<rect x="789.5" y="799.5" width="13" height="12" fill="none" stroke="#fff"/><rect x="792.5" y="802.5" width="7" height="7" fill="none" stroke="#fff"/><path d="M794.5 804.5h3M794.5 806.5h3" stroke="#fff"/>
<rect x="827.5" y="799.5" width="13" height="12" fill="none" stroke="#fff"/><rect x="830" y="800" width="3" height="6" fill="#fff"/><rect x="834.5" y="800" width="3" height="6" fill="#fff"/></svg>
<!--/SICONS-->
<!--/STATUS-->
</body></html>
